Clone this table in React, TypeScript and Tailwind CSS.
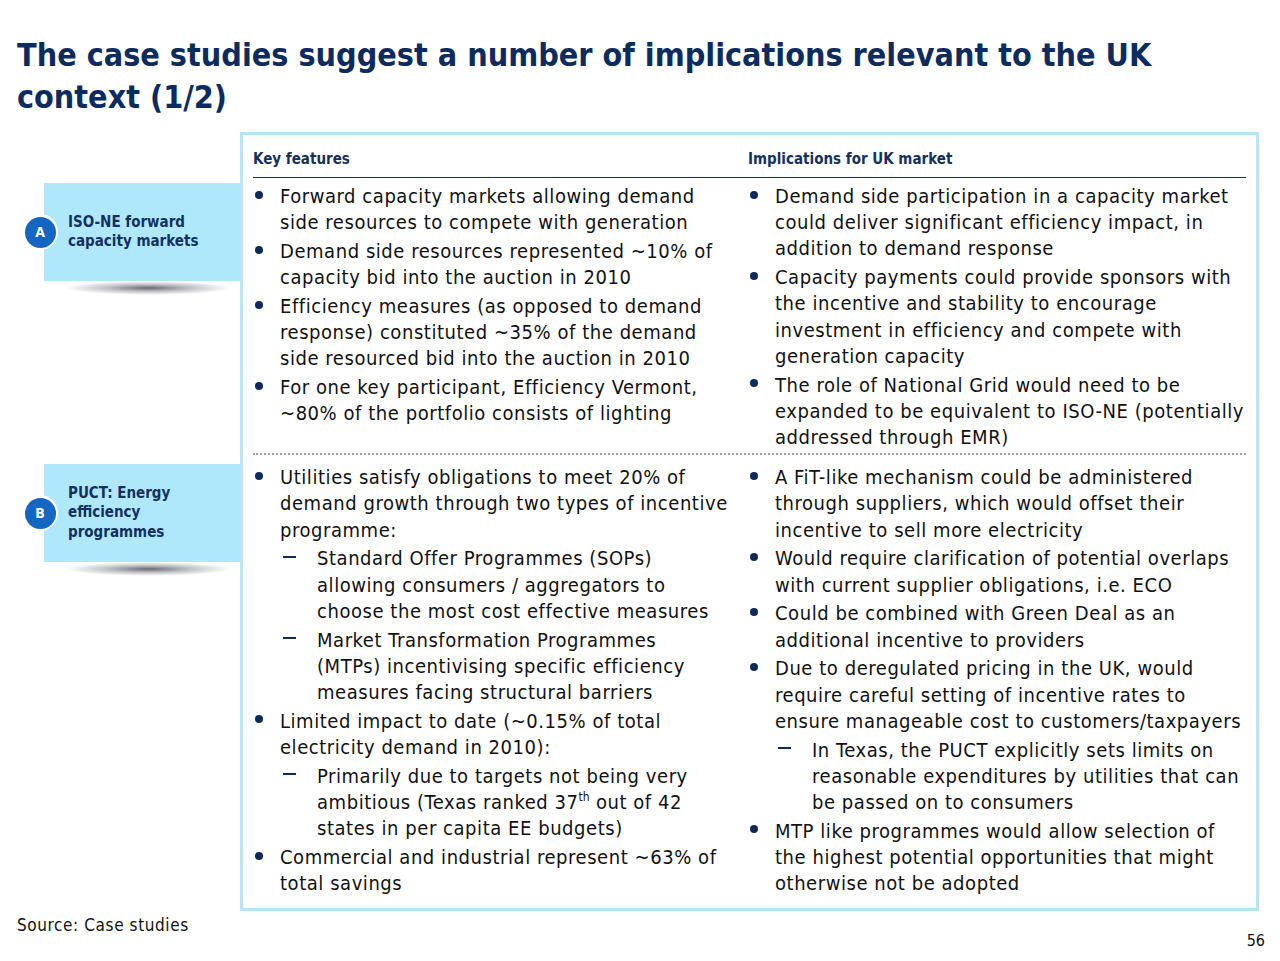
import React from 'react';

interface Item {
  lines: React.ReactNode[];
  subs?: React.ReactNode[][];
}

interface RowData {
  letter: string;
  label: string[];
  features: Item[];
  implications: Item[];
}

const rows: RowData[] = [
  {
    letter: 'A',
    label: ['ISO-NE forward', 'capacity markets'],
    features: [
      { lines: ['Forward capacity markets allowing demand', 'side resources to compete with generation'] },
      { lines: ['Demand side resources represented ~10% of', 'capacity bid into the auction in 2010'] },
      {
        lines: [
          'Efficiency measures (as opposed to demand',
          'response) constituted ~35% of the demand',
          'side resourced bid into the auction in 2010',
        ],
      },
      { lines: ['For one key participant, Efficiency Vermont,', '~80% of the portfolio consists of lighting'] },
    ],
    implications: [
      {
        lines: [
          'Demand side participation in a capacity market',
          'could deliver significant efficiency impact, in',
          'addition to demand response',
        ],
      },
      {
        lines: [
          'Capacity payments could provide sponsors with',
          'the incentive and stability to encourage',
          'investment in efficiency and compete with',
          'generation capacity',
        ],
      },
      {
        lines: [
          'The role of National Grid would need to be',
          'expanded to be equivalent to ISO-NE (potentially',
          'addressed through EMR)',
        ],
      },
    ],
  },
  {
    letter: 'B',
    label: ['PUCT: Energy', 'efficiency', 'programmes'],
    features: [
      {
        lines: [
          'Utilities satisfy obligations to meet 20% of',
          'demand growth through two types of incentive',
          'programme:',
        ],
        subs: [
          ['Standard Offer Programmes (SOPs)', 'allowing consumers / aggregators to', 'choose the most cost effective measures'],
          ['Market Transformation Programmes', '(MTPs) incentivising specific efficiency', 'measures facing structural barriers'],
        ],
      },
      {
        lines: ['Limited impact to date (~0.15% of total', 'electricity demand in 2010):'],
        subs: [
          [
            'Primarily due to targets not being very',
            <>
              ambitious (Texas ranked 37
              <span className="relative -top-[8px] text-[12px] leading-none tracking-normal">th</span> out of 42
            </>,
            'states in per capita EE budgets)',
          ],
        ],
      },
      { lines: ['Commercial and industrial represent ~63% of', 'total savings'] },
    ],
    implications: [
      {
        lines: [
          'A FiT-like mechanism could be administered',
          'through suppliers, which would offset their',
          'incentive to sell more electricity',
        ],
      },
      {
        lines: ['Would require clarification of potential overlaps', 'with current supplier obligations, i.e. ECO'],
      },
      { lines: ['Could be combined with Green Deal as an', 'additional incentive to providers'] },
      {
        lines: [
          'Due to deregulated pricing in the UK, would',
          'require careful setting of incentive rates to',
          'ensure manageable cost to customers/taxpayers',
        ],
        subs: [
          [
            'In Texas, the PUCT explicitly sets limits on',
            'reasonable expenditures by utilities that can',
            'be passed on to consumers',
          ],
        ],
      },
      {
        lines: [
          'MTP like programmes would allow selection of',
          'the highest potential opportunities that might',
          'otherwise not be adopted',
        ],
      },
    ],
  },
];

const Lines: React.FC<{ lines: React.ReactNode[] }> = ({ lines }) => (
  <div className="flex-1">
    {lines.map((l, i) => (
      <div key={i} className="whitespace-nowrap">
        {l}
      </div>
    ))}
  </div>
);

const BulletList: React.FC<{ items: Item[] }> = ({ items }) => (
  <ul className="flex flex-col gap-[2.6px]">
    {items.map((item, i) => (
      <li key={i}>
        <div className="flex">
          <div className="w-[27px] shrink-0 h-[26.2px] flex items-center pl-[2px]">
            <span className="w-[8px] h-[8px] -mt-[3px] rounded-full bg-[#0d2a5c]" />
          </div>
          <Lines lines={item.lines} />
        </div>
        {item.subs && (
          <ul className="mt-[2.6px] flex flex-col gap-[2.6px]">
            {item.subs.map((s, j) => (
              <li key={j} className="flex pl-[27px]">
                <div className="w-[37px] shrink-0 h-[26.2px] flex items-center pl-[3px]">
                  <span className="w-[13px] h-[2px] -mt-[4px] bg-[#0d2a5c]" />
                </div>
                <Lines lines={s} />
              </li>
            ))}
          </ul>
        )}
      </li>
    ))}
  </ul>
);

const Label: React.FC<{ letter: string; lines: string[] }> = ({ letter, lines }) => (
  <div className="flex flex-col">
    <div className="flex items-center h-[98px]">
      <div className="relative z-10 w-[36px] h-[36px] ml-[5px] -mr-[14px] shrink-0 rounded-full bg-white flex items-center justify-center">
        <div className="w-[31px] h-[31px] rounded-full bg-[#1565c3] text-white font-bold text-[14px] flex items-center justify-center">
          {letter}
        </div>
      </div>
      <div className="h-full flex-1 bg-[#b0e8fb] flex flex-col justify-center pl-[24px] text-[15px] leading-[19.5px] font-bold text-[#13315f]">
        {lines.map((l) => (
          <div key={l}>{l}</div>
        ))}
      </div>
    </div>
    <div className="ml-[48px] mr-[8px] h-[14px] bg-[radial-gradient(ellipse_at_center,rgba(80,80,90,0.85)_0%,rgba(120,120,130,0.45)_35%,rgba(255,255,255,0)_70%)]" />
  </div>
);

export default function App() {
  return (
    <div
      className="w-[1280px] h-[961px] bg-white text-[#111] flex flex-col px-[17px]"
      style={{ fontFamily: '"DejaVu Sans Condensed", "DejaVu Sans", sans-serif' }}
    >
      <h1 className="mt-[34px] text-[32px] leading-[42px] font-bold text-[#0d2b5e]">
        The case studies suggest a number of implications relevant to the UK context (1/2)
      </h1>

      <div className="mt-[14px] grid grid-cols-[223px_1019px]">
        <div />
        <div className="border-t-[3px] border-x-[3px] border-[#b6e5f5] px-[10px] pt-[14px]">
          <div className="grid grid-cols-[495px_1fr] border-b border-[#1a2f5a] pb-[8px] text-[15px] leading-[20px] font-bold text-[#13315f]">
            <div>Key features</div>
            <div>Implications for UK market</div>
          </div>
        </div>

        {rows.map((row, idx) => (
          <React.Fragment key={row.letter}>
            <div className={idx === 0 ? 'pt-[5px]' : 'pt-[9px]'}>
              <Label letter={row.letter} lines={row.label} />
            </div>
            <div
              className={
                idx === 0
                  ? 'border-x-[3px] border-[#b6e5f5] px-[10px] pt-[5px]'
                  : 'border-x-[3px] border-b-[3px] border-[#b6e5f5] px-[10px] pt-[9px] pb-[12px]'
              }
            >
              <div
                className={
                  idx === 0
                    ? 'grid grid-cols-[495px_1fr] text-[20px] leading-[26.2px] tracking-[0.55px] pb-[3px] border-b-2 border-dotted border-[#a0a0a0]'
                    : 'grid grid-cols-[495px_1fr] text-[20px] leading-[26.2px] tracking-[0.55px]'
                }
              >
                <div>
                  <BulletList items={row.features} />
                </div>
                <div>
                  <BulletList items={row.implications} />
                </div>
              </div>
            </div>
          </React.Fragment>
        ))}
      </div>

      <div className="mt-[3px] text-[17px] leading-[22px] tracking-[0.6px] text-[#111]">Source: Case studies</div>
      <div className="-mt-[5px] self-end -mr-[2px] text-[16px] leading-[20px] text-[#111]">56</div>
    </div>
  );
}
